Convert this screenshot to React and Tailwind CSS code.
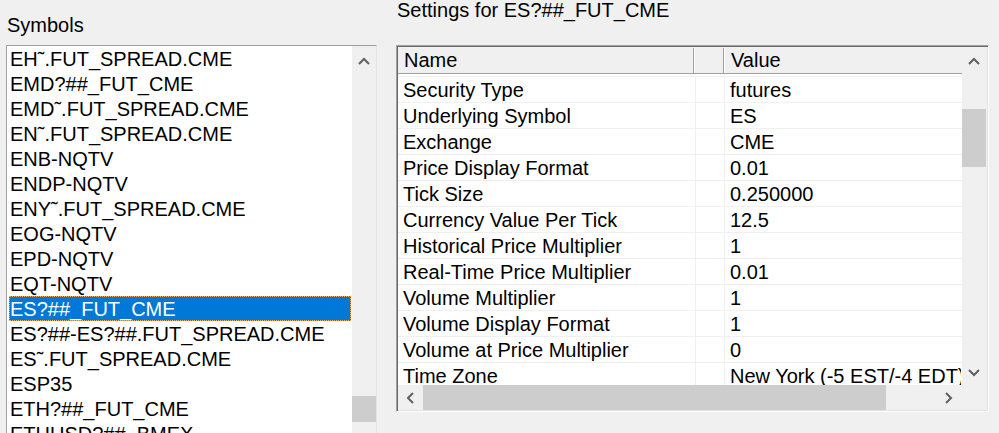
import React from "react";

const symbols = [
  "EH˜.FUT_SPREAD.CME",
  "EMD?##_FUT_CME",
  "EMD˜.FUT_SPREAD.CME",
  "EN˜.FUT_SPREAD.CME",
  "ENB-NQTV",
  "ENDP-NQTV",
  "ENY˜.FUT_SPREAD.CME",
  "EOG-NQTV",
  "EPD-NQTV",
  "EQT-NQTV",
  "ES?##_FUT_CME",
  "ES?##-ES?##.FUT_SPREAD.CME",
  "ES˜.FUT_SPREAD.CME",
  "ESP35",
  "ETH?##_FUT_CME",
  "ETHUSD?##_BMEX",
];

const settings = [
  ["Security Type", "futures"],
  ["Underlying Symbol", "ES"],
  ["Exchange", "CME"],
  ["Price Display Format", "0.01"],
  ["Tick Size", "0.250000"],
  ["Currency Value Per Tick", "12.5"],
  ["Historical Price Multiplier", "1"],
  ["Real-Time Price Multiplier", "0.01"],
  ["Volume Multiplier", "1"],
  ["Volume Display Format", "1"],
  ["Volume at Price Multiplier", "0"],
  ["Time Zone", "New York (-5 EST/-4 EDT)"],
];

// small scrollbar chevrons
function Chevron({ dir }) {
  const pts = {
    up: "1,7 6,2 11,7",
    down: "1,2 6,7 11,2",
    left: "7,1 2,6 7,11",
    right: "2,1 7,6 2,11",
  }[dir];
  const vertical = dir === "up" || dir === "down";
  return (
    <svg
      width={vertical ? 12 : 9}
      height={vertical ? 9 : 12}
      viewBox={vertical ? "0 0 12 9" : "0 0 9 12"}
      className="block"
    >
      <polyline points={pts} fill="none" stroke="#606060" strokeWidth="2" />
    </svg>
  );
}

function SymbolList() {
  return (
    <div className="flex w-[371px] flex-1 border-t border-l border-[#a0a0a0] border-r border-r-[#e3e3e3] bg-white overflow-hidden">
      <div className="flex-1 pl-[2px] pr-[1px]">
        {symbols.map((s) => {
          const selected = s === "ES?##_FUT_CME";
          return (
            <div
              key={s}
              className={
                selected
                  ? "h-[25px] pl-[1px] pt-[1px] leading-[24px] whitespace-nowrap bg-[#0078d7] text-white outline-1 outline-dotted outline-[#f3b06a] -outline-offset-1"
                  : "h-[25px] pl-[1px] pt-[1px] leading-[24px] whitespace-nowrap text-black"
              }
            >
              {s}
            </div>
          );
        })}
      </div>
      <div className="flex w-[24px] flex-col bg-[#f0f0f0]">
        <div className="flex h-[25px] items-center justify-center pt-[5px]">
          <Chevron dir="up" />
        </div>
        <div className="h-[325px]" />
        <div className="h-[26px] bg-[#cdcdcd]" />
      </div>
    </div>
  );
}

function SettingsGrid() {
  return (
    <div className="flex h-[367px] w-[593px] flex-col border-t border-l border-[#a0a0a0] border-r border-b border-r-white border-b-white shadow-[inset_1px_1px_0_#696969,inset_-1px_-1px_0_#e3e3e3] p-[1px]">
      <div className="flex h-[338px]">
        <div className="w-[564px] overflow-hidden bg-white">
          <div className="flex h-[27px] border-b border-[#a0a0a0] bg-[#f0f0f0] pt-[1px] leading-[25px]">
            <div className="w-[296px] border-r border-[#a0a0a0] pl-[6px]">Name</div>
            <div className="w-[30px] border-r border-[#a0a0a0] shadow-[inset_1px_0_0_#fff]" />
            <div className="flex-1 pl-[7px] shadow-[inset_1px_0_0_#fff]">Value</div>
          </div>
          <div className="pt-[2px]">
            {settings.map(([name, value]) => (
              <div key={name} className="flex h-[26px] border-t border-[#f0f0f0] whitespace-nowrap">
                <div className="w-[298px] overflow-hidden border-r border-[#f0f0f0] pl-[5px] pt-[1px] leading-[24px]">{name}</div>
                <div className="w-[29px] border-r border-[#f0f0f0]" />
                <div className="w-[236px] overflow-hidden pl-[5px] pt-[1px] leading-[24px]">{value}</div>
              </div>
            ))}
          </div>
        </div>
        <div className="flex w-[24px] flex-col bg-[#f0f0f0]">
          <div className="flex h-[25px] items-center justify-center pt-[3px]">
            <Chevron dir="up" />
          </div>
          <div className="h-[37px]" />
          <div className="h-[58px] bg-[#cdcdcd]" />
          <div className="flex-1" />
          <div className="flex h-[25px] items-center justify-center">
            <Chevron dir="down" />
          </div>
        </div>
      </div>
      <div className="flex h-[25px] bg-[#f0f0f0]">
        <div className="flex w-[25px] items-center justify-center pt-[1px]">
          <Chevron dir="left" />
        </div>
        <div className="w-[463px] bg-[#cdcdcd]" />
        <div className="flex-1" />
        <div className="flex w-[25px] items-center justify-center pt-[1px] pr-[4px]">
          <Chevron dir="right" />
        </div>
        <div className="w-[24px]" />
      </div>
    </div>
  );
}

export default function App() {
  return (
    <div className="flex h-[433px] w-[999px] overflow-hidden bg-[#f0f0f0] text-[20px] text-black font-['Liberation_Sans',Arial,sans-serif]">
      <div className="flex w-[390px] flex-col pl-[6px]">
        <div className="h-[45px] shrink-0 pl-[1px] pt-[13px] leading-[25px]">Symbols</div>
        <SymbolList />
      </div>
      <div className="flex flex-col pl-[6px]">
        <div className="h-[45px] shrink-0 pl-[1px] leading-[20px]">Settings for ES?##_FUT_CME</div>
        <SettingsGrid />
      </div>
    </div>
  );
}
